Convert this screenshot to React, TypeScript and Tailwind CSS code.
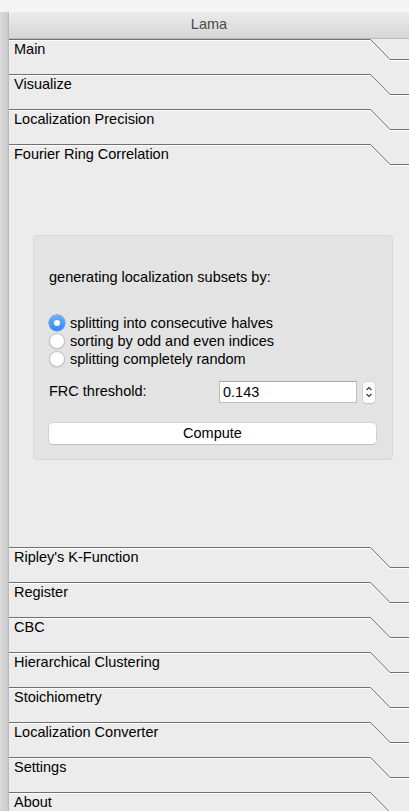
import { useState } from 'react';

const font = { fontFamily: '"Liberation Sans", Arial, sans-serif' };

const topTabs = ['Main', 'Visualize', 'Localization Precision', 'Fourier Ring Correlation'];
const bottomTabs = [
  "Ripley's K-Function",
  'Register',
  'CBC',
  'Hierarchical Clustering',
  'Stoichiometry',
  'Localization Converter',
  'Settings',
  'About',
];

const modes = [
  'splitting into consecutive halves',
  'sorting by odd and even indices',
  'splitting completely random',
];

// toolbox header with the slanted tab edge on the right
function TabHeader({ label }: { label: string }) {
  return (
    <div className="relative h-[35px] shrink-0">
      <svg className="absolute left-0 top-0" width="400" height="24" viewBox="0 0 400 24">
        <path d="M0 1.5 H361 L380.5 21.5 H400" fill="none" stroke="#ffffff" strokeWidth="1" />
        <path d="M0 0.5 H361.5 L381 20.5 H400" fill="none" stroke="#707070" strokeWidth="1" />
      </svg>
      <div className="pl-[5px] pt-[2px] text-[14.5px] leading-[17px] text-black">{label}</div>
    </div>
  );
}

function Radio({ checked }: { checked: boolean }) {
  if (checked) {
    return (
      <span className="flex h-[16px] w-[16px] shrink-0 items-center justify-center rounded-full bg-gradient-to-b from-[#69b1fb] to-[#2f86f5] shadow-[0_0_0_0.5px_#2a78e0]">
        <span className="h-[6px] w-[6px] rounded-full bg-white" />
      </span>
    );
  }
  return (
    <span className="h-[16px] w-[16px] shrink-0 rounded-full border border-[#c4c4c4] bg-white shadow-[0_0.5px_1px_rgba(0,0,0,0.15)]" />
  );
}

export default function App() {
  const [mode, setMode] = useState(0);
  const [threshold, setThreshold] = useState('0.143');

  return (
    <div className="flex h-[811px] w-[409px] overflow-hidden bg-[#f4f4f4]" style={font}>
      <div className="mt-[12px] w-[9px] shrink-0 border-r border-[#b9b9b9] bg-gradient-to-r from-[#dadada] to-[#cbcbcb]" />
      <div className="mt-[12px] flex w-[400px] shrink-0 flex-col overflow-hidden rounded-tl-[5px] bg-[#ececec]">
        <div className="flex h-[27px] shrink-0 items-center justify-center border-b border-[#b8b8b8] bg-gradient-to-b from-[#ebebeb] to-[#d6d6d6] text-[14.5px] text-[#4a4a4a]">
          Lama
        </div>

        {topTabs.map((t) => (
          <TabHeader key={t} label={t} />
        ))}

        <div className="h-[368px] shrink-0 pl-[24px] pt-[56px]">
          <div className="h-[225px] w-[360px] rounded-[4px] border border-[#d8d8d8] bg-[#e3e3e3] px-[15px] pt-[33px] text-[14.5px] text-black">
            <div className="leading-[17px]">generating localization subsets by:</div>

            <div className="mt-[28px] flex flex-col">
              {modes.map((m, i) => (
                <label
                  key={m}
                  className="flex h-[18px] cursor-default items-center gap-[5px]"
                  onClick={() => setMode(i)}
                >
                  <Radio checked={mode === i} />
                  <span className="leading-[17px]">{m}</span>
                </label>
              ))}
            </div>

            <div className="mt-[13px] flex h-[22px] items-center">
              <span className="w-[170px]">FRC threshold:</span>
              <input
                value={threshold}
                onChange={(e) => setThreshold(e.target.value)}
                className="h-[22px] w-[138px] border border-[#bdbdbd] border-t-[#a9a9a9] bg-white px-[3px] text-[14.5px] text-black outline-none"
              />
              <div className="ml-[6px] flex h-[21px] w-[12px] flex-col items-center justify-center rounded-[4px] bg-white shadow-[0_0_0_0.5px_#c4c4c4,0_1px_1px_rgba(0,0,0,0.15)]">
                <svg width="8" height="16" viewBox="0 0 8 16">
                  <path d="M1.5 6 L4 3.5 L6.5 6" fill="none" stroke="#333" strokeWidth="1.1" />
                  <path d="M1.5 10 L4 12.5 L6.5 10" fill="none" stroke="#333" strokeWidth="1.1" />
                </svg>
              </div>
            </div>

            <button className="mt-[20px] h-[21px] w-[327px] rounded-[4px] bg-white text-[14.5px] leading-[17px] text-black shadow-[0_0_0_0.5px_#c2c2c2,0_1px_1px_rgba(0,0,0,0.18)]">
              Compute
            </button>
          </div>
        </div>

        {bottomTabs.map((t) => (
          <TabHeader key={t} label={t} />
        ))}
      </div>
    </div>
  );
}
